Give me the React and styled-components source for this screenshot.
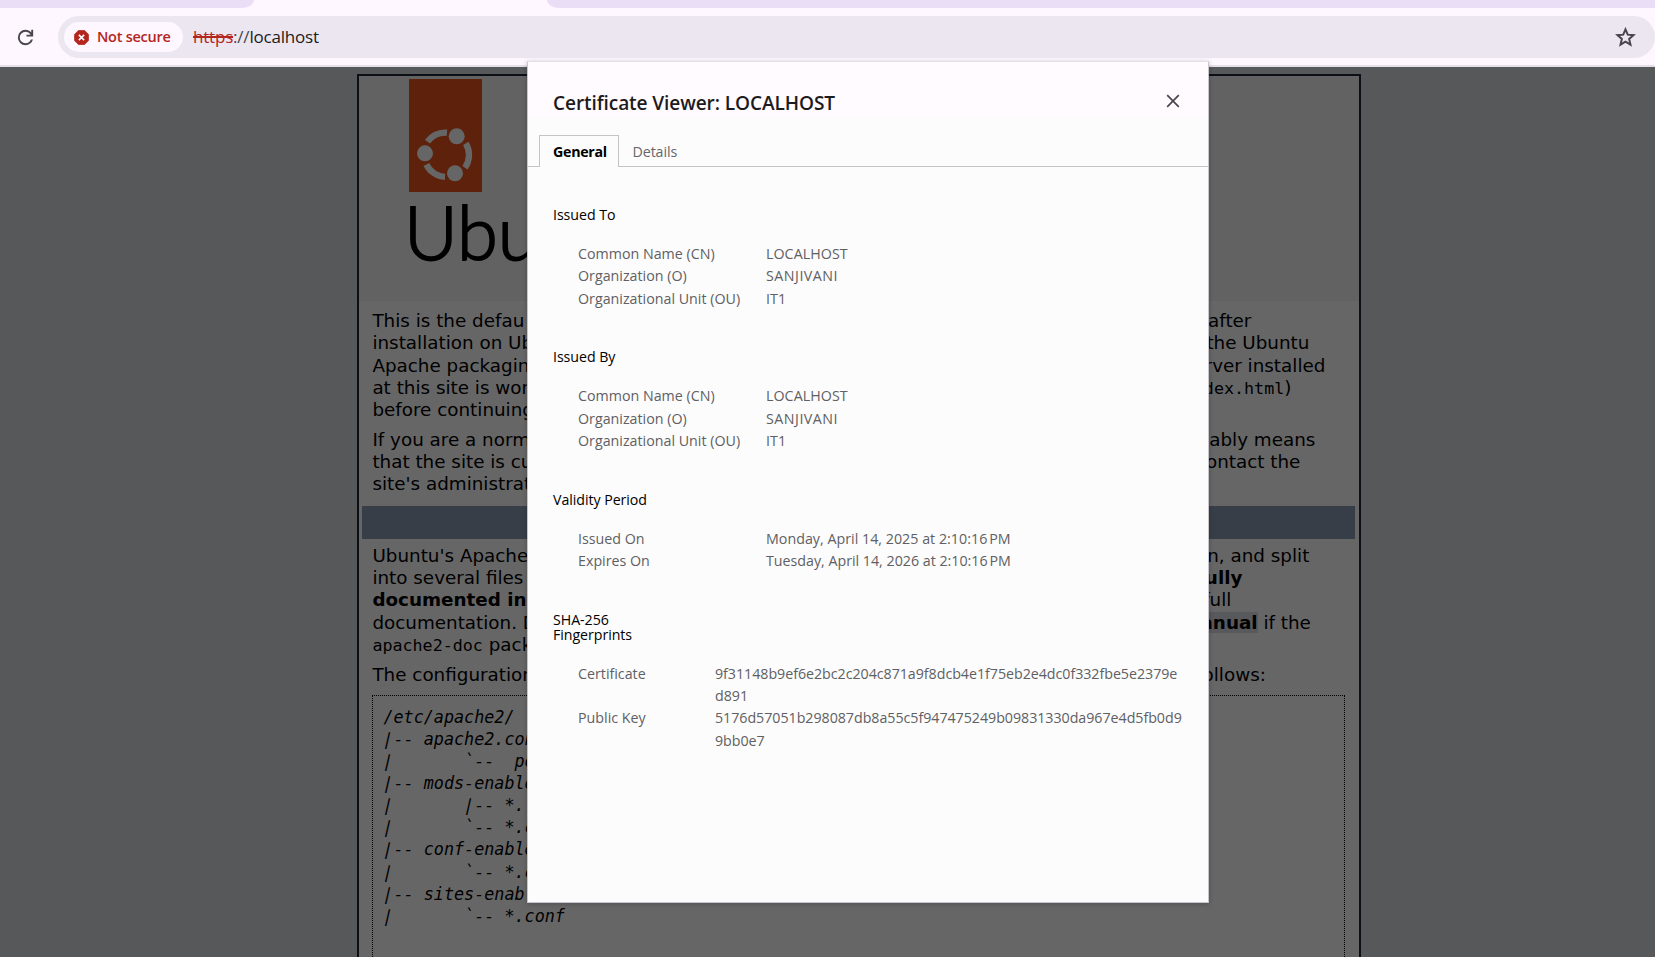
import React from "react";
import styled, { createGlobalStyle } from "styled-components";

const GlobalStyle = createGlobalStyle`
  * { box-sizing: border-box; }
  body { margin: 0; overflow: hidden; }
`;

const ui = `"Segoe UI", "Open Sans", "Noto Sans", sans-serif`;

const Window = styled.div`
  position: relative;
  width: 1655px;
  height: 957px;
  display: flex;
  flex-direction: column;
  overflow: hidden;
  background: #fef7ff;
`;

/* ---------- browser chrome ---------- */
const TabStrip = styled.div`
  height: 8px;
  display: flex;
  justify-content: space-between;
`;
const InactiveTabs = styled.div`
  width: ${(p) => p.$width}px;
  background: #eaddf6;
  border-radius: ${(p) => (p.$side === "left" ? "0 0 13px 0 / 0 0 8px 0" : "0 0 0 13px / 0 0 0 8px")};
`;
const Toolbar = styled.div`
  height: 59px;
  flex: none;
  display: flex;
  align-items: flex-start;
  padding: 8px 0 0 14px;
  border-bottom: 2px solid #e5dfe9;
`;
const ReloadButton = styled.div`
  width: 44px;
  height: 42px;
  display: flex;
  align-items: center;
`;
const Omnibox = styled.div`
  flex: 1;
  height: 42px;
  border-radius: 21px;
  background: #ece6f0;
  display: flex;
  align-items: center;
  padding: 0 19px 0 6px;
`;
const SecurityChip = styled.div`
  width: 119px;
  height: 30px;
  border-radius: 15px;
  background: #fef7ff;
  display: flex;
  align-items: center;
  gap: 8px;
  padding-left: 10px;
  color: #b3261e;
  font: 550 14.5px/30px ${ui};
  letter-spacing: -0.25px;
  white-space: nowrap;
`;
const Address = styled.div`
  flex: 1;
  margin-left: 10px;
  font: 400 17px/42px ${ui};
  letter-spacing: -0.2px;
  color: #1d1b20;
`;
const Scheme = styled.span`
  color: #b3261e;
  text-decoration: line-through;
  text-decoration-thickness: 2px;
`;
const Separator = styled.span`
  color: #49454f;
`;

/* ---------- Apache default page ---------- */
const Page = styled.div`
  position: relative;
  flex: 1;
  min-height: 0;
  overflow: hidden;
  background: #d8dbe2;
  padding: 7px 0 0 63px;
  display: flex;
  justify-content: center;
`;
const Sheet = styled.div`
  width: 1004px;
  height: 1200px;
  border: 2px solid #212738;
  background: #fff;
  font: 18.33px/22.28px Verdana, "DejaVu Sans", sans-serif;
  color: #000;
  flex: none;
`;
const SheetHeader = styled.div`
  height: 225px;
  padding: 3px 0 0 50px;
  background: #f6f6f6;
`;
const LogoMark = styled.svg`
  display: block;
`;
const Wordmark = styled.div`
  margin: -4px 0 0 -5px;
  font: 300 74px/88px Lato, sans-serif;
  color: #000;
  -webkit-text-stroke: 1.9px #000;
`;
const Copy = styled.div`
  padding: ${(p) => p.$top}px 13px 0 13.4px;
`;
const Paragraph = styled.p`
  margin: 0 0 7.4px;
`;
const Line = styled.span`
  display: flex;
  justify-content: space-between;
  height: 22.28px;
  width: ${(p) => p.$width || 950}px;
  white-space: pre;
`;
const Mono = styled.code`
  font: 16.7px/22px Consolas, "DejaVu Sans Mono", monospace;
`;
const Marked = styled.b`
  background: #dcdfe6;
`;
const SectionBar = styled.div`
  height: 33px;
  margin: 10.8px 4px 0 3px;
  background: #8d9bb2;
`;
const Tree = styled.pre`
  margin: 9.5px 0 0;
  width: 973px;
  height: 500px;
  padding: 10px;
  border: 1px dotted #000;
  font: italic 16.75px/22.04px Consolas, "DejaVu Sans Mono", monospace;
`;
const TreeLine = styled.span`
  display: block;
  height: 22.04px;
`;
const Branch = styled.span`
  display: inline-block;
  transform: skewX(-13deg);
`;
const Scrim = styled.div`
  position: absolute;
  inset: 0;
  background: rgba(0, 0, 0, 0.6);
`;

/* ---------- certificate dialog ---------- */
const Dialog = styled.section`
  position: absolute;
  left: 527px;
  top: 61px;
  width: 682px;
  height: 842px;
  border: 1px solid #c9c5cd;
  border-top-color: #e6e1e9;
  background: #fcfcfc;
  box-shadow: 0 1px 5px rgba(0, 0, 0, 0.22);
  font: 14.25px/22.4px ${ui};
  color: #5f6063;
`;
const DialogHeader = styled.header`
  height: 55px;
  padding: 0 28px 0 25px;
  background: #fffbff;
  display: flex;
  justify-content: space-between;
`;
const Title = styled.h1`
  margin: 0;
  font: 600 19.1px/28px ${ui};
  letter-spacing: -0.1px;
  padding-top: 27px;
  color: #1d1b20;
`;
const CloseIcon = styled.svg`
  margin-top: 32px;
  flex: none;
`;
const Tabs = styled.nav`
  display: flex;
  padding: 18px 0 0 11px;
  height: 50px;
  box-shadow: inset 0 -1px #c4c4c4;
`;
const Tab = styled.div`
  width: ${(p) => (p.$active ? "80px" : "70px")};
  height: 32px;
  padding-left: ${(p) => (p.$active ? "13px" : "12.5px")};
  line-height: 32px;
  border: 1px solid ${(p) => (p.$active ? "#c4c4c4" : "transparent")};
  border-bottom: 0;
  background: ${(p) => (p.$active ? "#fcfcfc" : "transparent")};
  color: ${(p) => (p.$active ? "#000" : "#65666a")};
  font-weight: ${(p) => (p.$active ? 700 : 400)};
  letter-spacing: ${(p) => (p.$active ? "-0.3px" : "-0.1px")};
`;
const Details = styled.div`
  padding: 39.8px 20px 0 25px;
`;
const Group = styled.section`
  padding-bottom: 39.2px;
`;
const GroupTitle = styled.h2`
  margin: 0 0 21px;
  width: 100px;
  font: 400 14.2px/15px ${ui};
  letter-spacing: -0.05px;
  color: #000;
`;
const Row = styled.div`
  display: flex;
  padding-left: 25px;
`;
const Label = styled.div`
  width: ${(p) => p.$width}px;
  flex: none;
  white-space: nowrap;
`;
const Value = styled.div`
  white-space: pre;
  letter-spacing: ${(p) => p.$tracking || 0}px;
`;

const identity = [
  ["Common Name (CN)", "LOCALHOST", 0.05],
  ["Organization (O)", "SANJIVANI", 0.5],
  ["Organizational Unit (OU)", "IT1", 0.1],
];
const groups = [
  { title: "Issued To", labelWidth: 188, rows: identity },
  { title: "Issued By", labelWidth: 188, rows: identity },
  {
    title: "Validity Period",
    labelWidth: 188,
    rows: [
      ["Issued On", "Monday, April 14, 2025 at 2:10:16\u202fPM", 0.02],
      ["Expires On", "Tuesday, April 14, 2026 at 2:10:16\u202fPM", -0.01],
    ],
  },
  {
    title: "SHA-256 Fingerprints",
    labelWidth: 137,
    rows: [
      ["Certificate", "9f31148b9ef6e2bc2c204c871a9f8dcb4e1f75eb2e4dc0f332fbe5e2379e\nd891", -0.04],
      ["Public Key", "5176d57051b298087db8a55c5f947475249b09831330da967e4d5fb0d9\n9bb0e7", -0.04],
    ],
  },
];

const tree = [
  ["", "/etc/apache2/"],
  ["|", "-- apache2.con"],
  ["|", "       `--  po"],
  ["|", "-- mods-enable"],
  ["|", "       ", "|", "-- *."],
  ["|", "       `-- *.c"],
  ["|", "-- conf-enable"],
  ["|", "       `-- *.c"],
  ["|", "-- sites-enab"],
  ["|", "       `-- *.conf"],
];

function UbuntuMark() {
  return (
    <LogoMark width="73" height="113" viewBox="0 0 73 113">
      <rect width="73" height="113" fill="#e95420" />
      <g fill="none" stroke="#fff" strokeWidth="6.3">
        <path d="M18.500 62.600A22.500 22.500 0 0 1 38 53.600" />
        <path d="M56.800 64.300A22.500 22.500 0 0 1 56 88.700" />
        <path d="M36 97.900A22.500 22.500 0 0 1 17.400 85.500" />
      </g>
      <g fill="#fff">
        <circle cx="47.700" cy="57.300" r="8" />
        <circle cx="16" cy="74.300" r="8" />
        <circle cx="46" cy="94.300" r="8" />
      </g>
    </LogoMark>
  );
}

/* Only the ends of each line show on either side of the dialog. */
function ApachePage() {
  return (
    <Sheet>
      <SheetHeader>
        <UbuntuMark />
        <Wordmark>Ubu</Wordmark>
      </SheetHeader>
      <Copy $top={9}>
        <Paragraph>
          <Line $width={879}><span>This is the defau</span><span>after</span></Line>
          <Line $width={937}><span>installation on Ub</span><span>the Ubuntu</span></Line>
          <Line $width={953}><span>Apache packagin</span><span>rver installed</span></Line>
          <Line $width={919}><span>at this site is wor</span><span><Mono>dex.html</Mono>)</span></Line>
          <Line><span>before continuing</span></Line>
        </Paragraph>
        <Paragraph>
          <Line $width={943}><span>If you are a norm</span><span>ably means</span></Line>
          <Line $width={928}><span>that the site is cu</span><span>ontact the</span></Line>
          <Line><span>site's administrat</span></Line>
        </Paragraph>
      </Copy>
      <SectionBar />
      <Copy $top={5.5}>
        <Paragraph>
          <Line $width={937}><span>Ubuntu's Apache</span><span>n, and split</span></Line>
          <Line $width={870}><span>into several files</span><b>ully</b></Line>
          <Line $width={859}><b>documented in</b><span>full</span></Line>
          <Line $width={938.5}><span>documentation. D</span><span><Marked>anual</Marked> if the</span></Line>
          <Line><span><Mono>apache2-doc</Mono> pack</span></Line>
        </Paragraph>
        <Paragraph>
          <Line $width={893.5}><span>The configuration</span><span>ollows:</span></Line>
        </Paragraph>
        <Tree>
          {tree.map((parts, i) => (
            <TreeLine key={i}>
              {parts.map((part, j) => (part === "|" ? <Branch key={j}>|</Branch> : part))}
            </TreeLine>
          ))}
        </Tree>
      </Copy>
    </Sheet>
  );
}

function CertificateDialog() {
  return (
    <Dialog>
      <DialogHeader>
        <Title>Certificate Viewer: LOCALHOST</Title>
        <CloseIcon width="14" height="14" viewBox="0 0 14 14" fill="none" stroke="#49454f" strokeWidth="1.7">
          <path d="M1.2 1.2l11.6 11.6M12.8 1.2L1.2 12.8" />
        </CloseIcon>
      </DialogHeader>
      <Tabs>
        <Tab $active>General</Tab>
        <Tab>Details</Tab>
      </Tabs>
      <Details>
        {groups.map((g) => (
          <Group key={g.title}>
            <GroupTitle>{g.title}</GroupTitle>
            {g.rows.map(([label, value, tracking]) => (
              <Row key={label}>
                <Label $width={g.labelWidth}>{label}</Label>
                <Value $tracking={tracking}>{value}</Value>
              </Row>
            ))}
          </Group>
        ))}
      </Details>
    </Dialog>
  );
}

export default function App() {
  return (
    <Window>
      <GlobalStyle />
      <TabStrip>
        <InactiveTabs $side="left" $width={254} />
        <InactiveTabs $side="right" $width={1108} />
      </TabStrip>
      <Toolbar>
        <ReloadButton>
          <svg width="23" height="23" viewBox="0 0 24 24" fill="#49454f">
            <path d="M12 20q-3.35 0-5.675-2.325T4 12t2.325-5.675T12 4q1.725 0 3.3.713T18 6.75V4h2v7h-7V9h4.2q-.8-1.4-2.187-2.2T12 6Q9.500 6 7.750 7.750T6 12t1.750 4.250T12 18q1.925 0 3.475-1.100T17.650 14h2.100q-.7 2.650-2.850 4.325T12 20" />
          </svg>
        </ReloadButton>
        <Omnibox>
          <SecurityChip>
            <svg width="15" height="15" viewBox="0 0 15 15">
              <path d="M4.6.3h5.800L14.700 4.600v5.800l-4.300 4.300H4.600L.3 10.400V4.600z" fill="#b3261e" stroke="#b3261e" strokeWidth=".6" strokeLinejoin="round" />
              <path d="M4.900 4.900l5.200 5.200M10.100 4.900l-5.200 5.200" stroke="#fff" strokeWidth="1.600" />
            </svg>
            Not secure
          </SecurityChip>
          <Address>
            <Scheme>https</Scheme><Separator>://</Separator>localhost
          </Address>
          <svg width="21" height="20" viewBox="0 0 20 19" fill="none" stroke="#49454f" strokeWidth="1.900">
            <path d="M10 2.200l2.150 5.050 5.500.48-4.170 3.620 1.250 5.370L10 13.870l-4.730 2.850 1.250-5.370L2.350 7.730l5.500-.48z" />
          </svg>
        </Omnibox>
      </Toolbar>
      <Page>
        <ApachePage />
        <Scrim />
      </Page>
      <CertificateDialog />
    </Window>
  );
}
